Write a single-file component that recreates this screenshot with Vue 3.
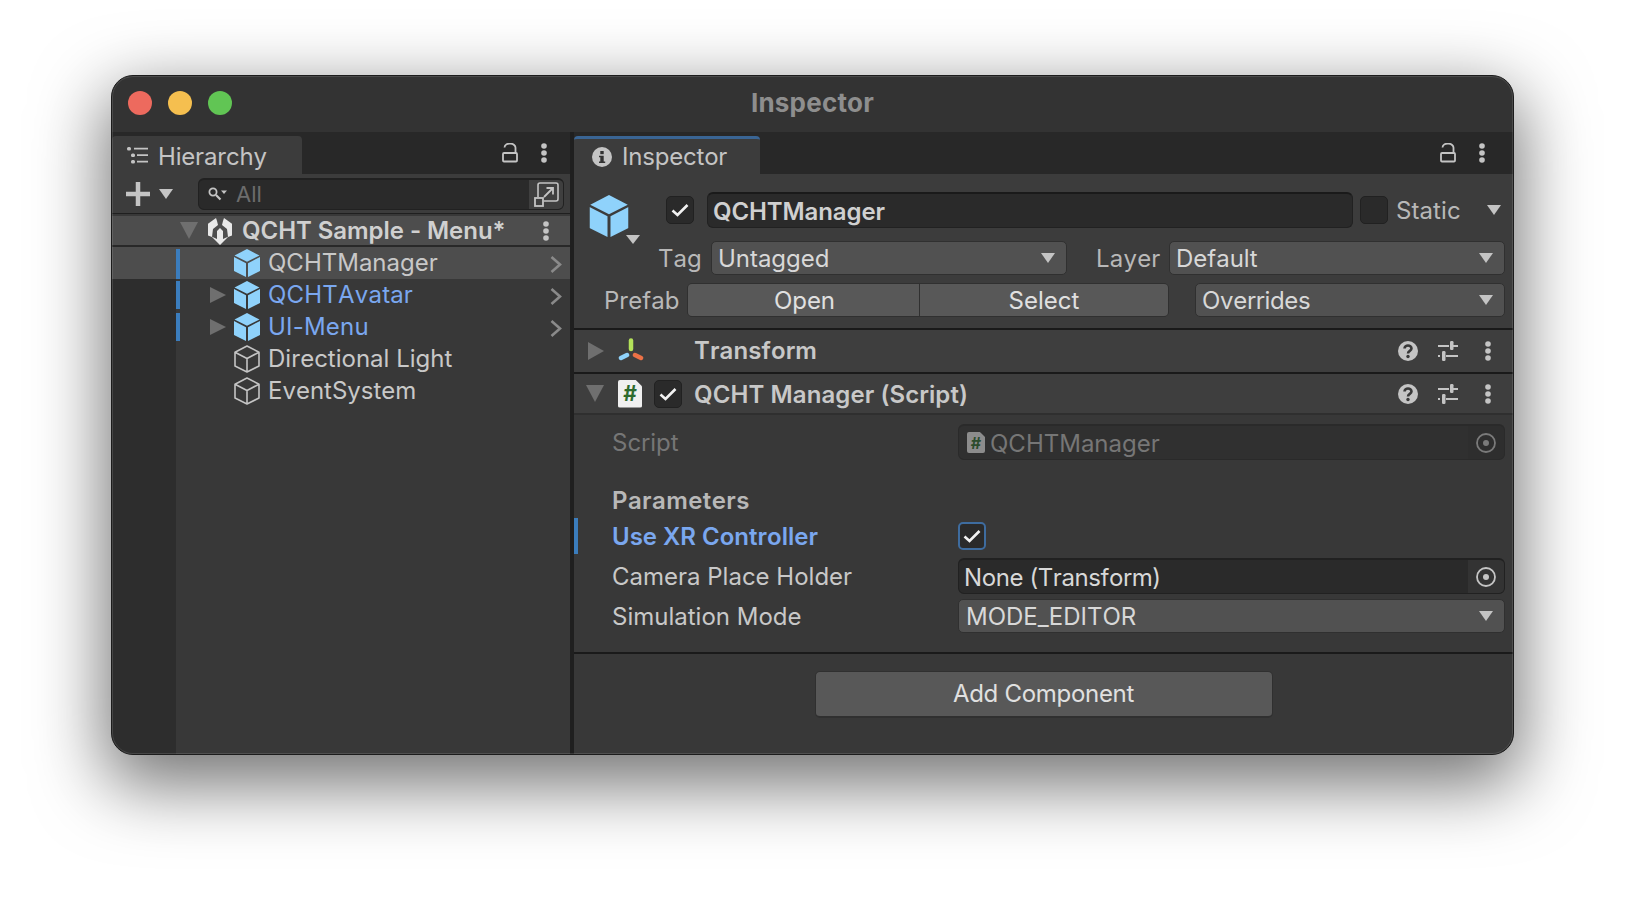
<template>
  <div class="page">
    <svg width="0" height="0" class="defs">
      <symbol id="cube" viewBox="0 0 26 28">
        <path d="M13 0 25.500 6.500 13 12.800.5 6.500z" fill="#8fd2fb" />
        <path d="M0 8 12 14.200V28L0 22z" fill="#8fd2fb" />
        <path d="M26 8 14 14.200V28L26 22z" fill="#8fd2fb" />
      </symbol>
      <symbol id="cube-line" viewBox="0 0 26 28">
        <path d="M13 1 25 7.200V21L13 27 1 21V7.200zM1 7.200 13 13.500 25 7.200M13 13.500V27" fill="none" stroke="#c4c4c4" stroke-width="1.600" stroke-linejoin="round" />
      </symbol>
      <symbol id="lock" viewBox="0 0 16 20">
        <path d="M2.500 4.500A5.500 4.200 0 0 1 13.500 5V10" fill="none" stroke="#c4c4c4" stroke-width="1.800" />
        <rect x="1" y="10" width="14" height="8.500" rx="1" fill="none" stroke="#c4c4c4" stroke-width="1.800" />
      </symbol>
      <symbol id="kebab" viewBox="0 0 6 20">
        <circle cx="3" cy="3" r="2.800" fill="#c4c4c4" />
        <circle cx="3" cy="10" r="2.800" fill="#c4c4c4" />
        <circle cx="3" cy="17" r="2.800" fill="#c4c4c4" />
      </symbol>
      <symbol id="check" viewBox="0 0 18 14">
        <path d="M1.500 7.500 6.500 12 16.500 2" fill="none" stroke="#f2f2f2" stroke-width="2.600" />
      </symbol>
      <symbol id="help" viewBox="0 0 20 20">
        <circle cx="10" cy="10" r="10" fill="#c4c4c4" />
        <path d="M6.500 7.500C6.500 3.500 13.500 3.500 13.500 7.500 13.500 10 10 9.800 10 12.500" fill="none" stroke="#383838" stroke-width="2.600" />
        <circle cx="10" cy="15.500" r="1.700" fill="#383838" />
      </symbol>
      <symbol id="sliders" viewBox="0 0 20 20">
        <path d="M0 5H11M15 5H20M0 15H2M8 15H20" stroke="#c4c4c4" stroke-width="2" />
        <rect x="12" y="0" width="3.500" height="9" rx="1.200" fill="#c4c4c4" />
        <rect x="4" y="10" width="3.500" height="10" rx="1.200" fill="#c4c4c4" />
      </symbol>
    </svg>

    <div class="window">
      <div class="titlebar">
        <div class="lights">
          <span class="light red"></span>
          <span class="light yellow"></span>
          <span class="light green"></span>
        </div>
        <span class="title">Inspector</span>
      </div>

      <div class="panes">
        <section class="hierarchy">
          <div class="tabbar">
            <div class="tab hier-tab">
              <svg class="list-icon" width="21" height="17" viewBox="0 0 21 17">
                <rect x="0" y="0" width="4" height="3.500" rx="1.500" fill="#c4c4c4" />
                <rect x="4" y="6.500" width="4" height="3.500" rx="1.500" fill="#c4c4c4" />
                <rect x="4" y="13" width="4" height="3.500" rx="1.500" fill="#c4c4c4" />
                <path d="M7 1.700H21M10 8.200H21M10 14.700H21" stroke="#c4c4c4" stroke-width="1.800" />
              </svg>
              <span class="tab-text">Hierarchy</span>
            </div>
            <div class="tab-actions hier-actions">
              <svg class="lock" width="16" height="20"><use href="#lock" /></svg>
              <svg class="kebab" width="6" height="20"><use href="#kebab" /></svg>
            </div>
          </div>

          <div class="toolbar">
            <svg class="plus" width="24" height="24" viewBox="0 0 24 24">
              <path d="M12 0V24M0 12H24" stroke="#c4c4c4" stroke-width="4.500" />
            </svg>
            <span class="tri tri-down toolbar-tri"></span>
            <div class="search">
              <svg class="search-icon" width="19" height="14" viewBox="0 0 19 14">
                <circle cx="5" cy="5" r="3.600" fill="none" stroke="#c4c4c4" stroke-width="1.800" />
                <path d="M8 8 12.500 12.500" stroke="#c4c4c4" stroke-width="2.200" />
                <path d="M13 3.500H19L16 7z" fill="#c4c4c4" />
              </svg>
              <span class="search-text">All</span>
              <span class="search-btn">
                <svg width="25" height="25" viewBox="0 0 25 25">
                  <path d="M4 15V3A2 2 0 0 1 6 1H22A2 2 0 0 1 24 3V17A2 2 0 0 1 22 19H10" fill="none" stroke="#c4c4c4" stroke-width="1.600" />
                  <rect x="1" y="16" width="8" height="8" fill="#3f3f3f" stroke="#c4c4c4" stroke-width="1.800" />
                  <path d="M10 15 19 6M12.500 6H19V12.500" fill="none" stroke="#c4c4c4" stroke-width="1.800" />
                </svg>
              </span>
            </div>
          </div>

          <div class="scene-row">
            <span class="tri tri-down tri-big scene-tri"></span>
            <svg class="unity" width="24" height="28" viewBox="4 3 24 28">
              <path d="M12 4 3.500 10 4 21.500 8 23 9 15 14 11 13 7z" fill="#e8e8e8" />
              <path d="M20 4 28.500 10 28 21.500 24 23 23 15 18 11 19 7z" fill="#e8e8e8" />
              <path d="M16 14 19 17V25L24.500 22.500 16 31 7.500 22.500 13 25V17z" fill="#e8e8e8" />
            </svg>
            <span class="scene-name">QCHT Sample - Menu*</span>
            <svg class="scene-kebab" width="6" height="20"><use href="#kebab" /></svg>
          </div>

          <div class="tree">
            <div v-for="row in rows" :key="row.name" class="row" :class="{ selected: row.selected }">
              <span class="gutter"></span>
              <span class="bar" :class="{ on: row.prefab }"></span>
              <span class="row-arrow"><span v-if="row.children" class="tri tri-right"></span></span>
              <svg class="row-icon" width="26" height="28"><use :href="row.prefab ? '#cube' : '#cube-line'" /></svg>
              <span class="row-name" :class="{ blue: row.children }">{{ row.name }}</span>
              <svg v-if="row.prefab" class="chevron" width="12" height="17" viewBox="0 0 12 17">
                <path d="M1.500 1 10 8.500 1.500 16" fill="none" stroke="#8a8a8a" stroke-width="2.600" />
              </svg>
            </div>
            <div class="tree-rest"><span class="gutter"></span></div>
          </div>
        </section>

        <section class="inspector">
          <div class="tabbar">
            <div class="tab insp-tab">
              <svg width="20" height="20" viewBox="0 0 20 20">
                <circle cx="10" cy="10" r="10" fill="#c4c4c4" />
                <rect x="8.300" y="4" width="3.400" height="3.200" fill="#333" />
                <path d="M7 8.700H11.700V14.500H13.200V16H7V14.500H8.300V10.200H7z" fill="#333" />
              </svg>
              <span class="tab-text">Inspector</span>
            </div>
            <div class="tab-actions insp-actions">
              <svg class="lock" width="16" height="20"><use href="#lock" /></svg>
              <svg class="kebab" width="6" height="20"><use href="#kebab" /></svg>
            </div>
          </div>

          <div class="go-header">
            <div class="go-line name-line">
              <svg class="go-cube" width="40" height="42" viewBox="0 0 26 28"><use href="#cube" /></svg>
              <span class="tri tri-down go-tri"></span>
              <span class="checkbox go-check"><svg width="18" height="14"><use href="#check" /></svg></span>
              <div class="name-field"><span>QCHTManager</span></div>
              <span class="checkbox"></span>
              <span class="static-label">Static</span>
              <span class="tri tri-down static-tri"></span>
            </div>
            <div class="go-line tag-line">
              <span class="tag-label">Tag</span>
              <div class="popup tag-popup"><span>Untagged</span><span class="tri tri-down"></span></div>
              <span class="layer-label">Layer</span>
              <div class="popup layer-popup"><span>Default</span><span class="tri tri-down"></span></div>
            </div>
            <div class="go-line prefab-line">
              <span class="prefab-label">Prefab</span>
              <div class="btn-group">
                <span class="seg open">Open</span>
                <span class="seg select">Select</span>
              </div>
              <div class="popup overrides"><span>Overrides</span><span class="tri tri-down"></span></div>
            </div>
          </div>

          <div class="comp-head transform-head">
            <span class="tri tri-right tri-big comp-tri"></span>
            <svg class="comp-icon" width="26" height="26" viewBox="0 0 26 26">
              <path d="M13 2.500V11" stroke="#b4e25a" stroke-width="4.500" stroke-linecap="round" />
              <path d="M9 17 3 20" stroke="#8fd2fb" stroke-width="4.500" stroke-linecap="round" />
              <path d="M17 17 23 20" stroke="#ec7146" stroke-width="4.500" stroke-linecap="round" />
            </svg>
            <span class="comp-spacer"></span>
            <span class="comp-name">Transform</span>
            <div class="comp-tools">
              <svg width="20" height="20"><use href="#help" /></svg>
              <svg width="20" height="20"><use href="#sliders" /></svg>
              <svg width="6" height="20"><use href="#kebab" /></svg>
            </div>
          </div>

          <div class="comp-head script-head">
            <span class="tri tri-down tri-big comp-tri"></span>
            <span class="script-icon"><b>#</b></span>
            <span class="checkbox comp-check"><svg width="18" height="14"><use href="#check" /></svg></span>
            <span class="comp-name">QCHT Manager (Script)</span>
            <div class="comp-tools">
              <svg width="20" height="20"><use href="#help" /></svg>
              <svg width="20" height="20"><use href="#sliders" /></svg>
              <svg width="6" height="20"><use href="#kebab" /></svg>
            </div>
          </div>

          <div class="props">
            <div class="prop script-prop">
              <span class="prop-label dim">Script</span>
              <div class="obj-field disabled">
                <span class="script-icon small"><b>#</b></span>
                <span class="obj-text">QCHTManager</span>
                <span class="picker">
                  <svg width="20" height="20" viewBox="0 0 20 20">
                    <circle cx="10" cy="10" r="9" fill="none" stroke="#7a7a7a" stroke-width="1.800" />
                    <circle cx="10" cy="10" r="3" fill="#7a7a7a" />
                  </svg>
                </span>
              </div>
            </div>
            <div class="params-title">Parameters</div>
            <div class="prop xr-prop">
              <span class="prop-label overridden">Use XR Controller</span>
              <span class="checkbox focused"><svg width="18" height="14"><use href="#check" /></svg></span>
            </div>
            <div class="prop camera-prop">
              <span class="prop-label">Camera Place Holder</span>
              <div class="obj-field">
                <span class="obj-text plain">None (Transform)</span>
                <span class="picker">
                  <svg width="20" height="20" viewBox="0 0 20 20">
                    <circle cx="10" cy="10" r="9" fill="none" stroke="#c4c4c4" stroke-width="1.800" />
                    <circle cx="10" cy="10" r="3" fill="#c4c4c4" />
                  </svg>
                </span>
              </div>
            </div>
            <div class="prop sim-prop">
              <span class="prop-label">Simulation Mode</span>
              <div class="popup sim-popup"><span>MODE_EDITOR</span><span class="tri tri-down"></span></div>
            </div>
          </div>

          <div class="add-area">
            <div class="add-btn"><span>Add Component</span></div>
          </div>
        </section>
      </div>
    </div>
  </div>
</template>

<script setup>
const rows = [
  { name: 'QCHTManager', prefab: true, selected: true },
  { name: 'QCHTAvatar', prefab: true, children: true },
  { name: 'UI-Menu', prefab: true, children: true },
  { name: 'Directional Light' },
  { name: 'EventSystem' },
];
</script>

<style>
html,
body {
  margin: 0;
  background: #fff;
  overflow: hidden;
}
</style>

<style scoped>
.page {
  width: 1626px;
  height: 902px;
  box-sizing: border-box;
  padding: 75px 112px 0 111px;
  background: #fff;
  font-family: Inter, "Liberation Sans", sans-serif;
  font-size: 24px;
  font-kerning: none;
  color: #c8c8c8;
}

.defs {
  position: absolute;
}

.window {
  width: 1403px;
  height: 680px;
  box-sizing: border-box;
  border: 1px solid #1c1c1c;
  border-radius: 22px;
  overflow: hidden;
  position: relative;
  display: flex;
  flex-direction: column;
  background: #333;
  box-shadow: 0 24px 70px 6px rgba(0, 0, 0, 0.55);
}

/* thin light ring just inside the window edge */
.window::after {
  content: "";
  position: absolute;
  inset: 0;
  border-radius: 21px;
  box-shadow: inset 0 0 0 1px rgba(255, 255, 255, 0.12);
  pointer-events: none;
}

.titlebar {
  height: 56px;
  flex: none;
  display: flex;
  align-items: center;
  justify-content: center;
  position: relative;
  background: #333;
}

.lights {
  position: absolute;
  left: 16px;
  top: 15px;
  display: flex;
  gap: 16px;
}

.light {
  width: 24px;
  height: 24px;
  border-radius: 50%;
}

.red { background: #ed6a5e; }
.yellow { background: #f5bf4f; }
.green { background: #61c554; }

.title {
  font-size: 26px;
  font-weight: 700;
  color: #8e8e8e;
  margin-top: -4px;
  letter-spacing: 0.2px;
}

.panes {
  flex: 1;
  display: flex;
  min-height: 0;
  gap: 4px;
  background: #1f1f1f;
}

.hierarchy {
  width: 458px;
  flex: none;
  display: flex;
  flex-direction: column;
  background: #383838;
}

.inspector {
  flex: 1;
  display: flex;
  flex-direction: column;
  background: #383838;
}

.tabbar {
  height: 42px;
  flex: none;
  display: flex;
  align-items: flex-end;
  justify-content: space-between;
  background: #282828;
}

.tab {
  height: 38px;
  box-sizing: border-box;
  display: flex;
  align-items: center;
  background: #3c3c3c;
  border-radius: 4px 4px 0 0;
  color: #c4c4c4;
}

.tab-text {
  letter-spacing: -0.2px;
}

.hier-tab {
  width: 190px;
  padding-left: 15px;
  gap: 10px;
}

.hier-tab .tab-text {
  margin-top: 2px;
}

.insp-tab {
  width: 186px;
  padding-left: 18px;
  gap: 10px;
  border-top: 3px solid #3a6594;
}

.tab-actions {
  align-self: center;
  display: flex;
  align-items: center;
}

.hier-actions {
  gap: 23px;
  margin-right: 23px;
}

.insp-actions {
  gap: 23px;
  margin-right: 28px;
}

.toolbar {
  height: 40px;
  flex: none;
  display: flex;
  align-items: center;
  padding-left: 14px;
  box-sizing: border-box;
  background: #3c3c3c;
  border-bottom: 1px solid #1f1f1f;
}

.tri {
  display: inline-block;
  flex: none;
  width: 0;
  height: 0;
}

.tri-down {
  border-left: 7px solid transparent;
  border-right: 7px solid transparent;
  border-top: 10px solid #c4c4c4;
}

.tri-right {
  border-top: 8px solid transparent;
  border-bottom: 8px solid transparent;
  border-left: 16px solid #6f6f6f;
}

.tri-big.tri-down {
  border-left-width: 9px;
  border-right-width: 9px;
  border-top: 17px solid #6f6f6f;
}

.tri-big.tri-right {
  border-top-width: 9px;
  border-bottom-width: 9px;
  border-left-width: 16px;
}

.toolbar-tri {
  margin-left: 9px;
}

.search {
  margin-left: 25px;
  width: 366px;
  height: 32px;
  box-sizing: border-box;
  display: flex;
  align-items: center;
  background: #2a2a2a;
  border: 1px solid #212121;
  border-top-width: 2px;
  border-radius: 6px;
  overflow: hidden;
}

.search-icon {
  margin-left: 9px;
}

.search-text {
  margin-left: 9px;
  color: #6c6c6c;
  font-size: 22px;
}

.search-btn {
  margin-left: auto;
  width: 34px;
  height: 100%;
  display: flex;
  align-items: center;
  justify-content: center;
  background: #3f3f3f;
}

.scene-row {
  height: 33px;
  flex: none;
  display: flex;
  align-items: center;
  box-sizing: border-box;
  background: #4d4d4d;
  border-top: 2px solid #383838;
  border-bottom: 2px solid #282828;
}

.scene-tri {
  margin-left: 68px;
}

.unity {
  margin-left: 10px;
}

.scene-name {
  margin-left: 10px;
  font-weight: 600;
  font-size: 24px;
  color: #d0d0d0;
  letter-spacing: -0.05px;
}

.scene-kebab {
  margin-left: auto;
  margin-right: 21px;
}

.tree {
  flex: 1;
  display: flex;
  flex-direction: column;
}

.row {
  height: 32px;
  flex: none;
  display: flex;
  align-items: center;
}

.row.selected {
  background: #4d4d4d;
}

.gutter {
  width: 64px;
  flex: none;
  height: 100%;
  background: #2d2d2d;
}

.selected .gutter {
  background: transparent;
}

.bar {
  width: 4px;
  height: 28px;
  flex: none;
  align-self: flex-end;
  margin-bottom: 2px;
}

.selected .bar {
  margin-bottom: 0;
  height: 30px;
}

.bar.on {
  background: #3b7dbd;
}

.row-arrow {
  width: 54px;
  flex: none;
  padding-left: 30px;
  box-sizing: border-box;
  display: flex;
  align-items: center;
}

.row-icon {
  flex: none;
}

.row-name {
  margin-left: 8px;
  margin-bottom: 2px;
  color: #c8c8c8;
}

.row-name.blue {
  color: #7aa7ef;
  letter-spacing: 0.2px;
}

.chevron {
  margin-left: auto;
  margin-right: 8px;
  margin-top: 3px;
}

.tree-rest {
  flex: 1;
  display: flex;
}

.tree-rest .gutter {
  height: auto;
}

.go-header {
  height: 154px;
  flex: none;
  box-sizing: border-box;
  background: #3c3c3c;
  padding-top: 18px;
  display: flex;
  flex-direction: column;
}

.go-line {
  display: flex;
  align-items: center;
  flex: none;
}

.name-line {
  height: 36px;
  position: relative;
}

.go-cube {
  margin-left: 15px;
  margin-top: 11px;
  flex: none;
}

.go-tri {
  position: absolute;
  left: 52px;
  top: 43px;
  border-left-width: 7px;
  border-right-width: 7px;
  border-top-width: 9px;
}

.checkbox {
  width: 28px;
  height: 28px;
  flex: none;
  box-sizing: border-box;
  display: flex;
  align-items: center;
  justify-content: center;
  background: #2a2a2a;
  border: 1px solid #212121;
  border-radius: 5px;
}

.go-check {
  margin-left: 37px;
}

.name-field {
  margin-left: 13px;
  width: 646px;
  height: 36px;
  box-sizing: border-box;
  padding-left: 5px;
  display: flex;
  align-items: center;
  background: #2a2a2a;
  border: 1px solid #212121;
  border-top: 2px solid #1a1a1a;
  border-radius: 6px;
  font-weight: 600;
  font-size: 24px;
  color: #d0d0d0;
}

.name-field span {
  margin-top: 2px;
  letter-spacing: -0.1px;
}

.name-line .checkbox:not(.go-check) {
  margin-left: 7px;
}

.static-label {
  margin-left: 8px;
  color: #b8b8b8;
  letter-spacing: 0.1px;
}

.static-tri {
  margin-left: 26px;
}

.popup {
  box-sizing: border-box;
  height: 34px;
  display: flex;
  align-items: center;
  justify-content: space-between;
  padding: 0 11px 0 6px;
  background: #515151;
  border: 1px solid #303030;
  border-radius: 5px;
  color: #d8d8d8;
}

.tag-line {
  margin-top: 13px;
  height: 34px;
}

.tag-label {
  margin-left: 84px;
  width: 53px;
  color: #b8b8b8;
}

.tag-popup {
  width: 356px;
}

.layer-label {
  margin-left: 29px;
  width: 73px;
  color: #b8b8b8;
  letter-spacing: 0.2px;
}

.layer-popup {
  width: 336px;
}

.prefab-line {
  margin-top: 8px;
  height: 34px;
}

.prefab-label {
  margin-left: 30px;
  width: 83px;
  color: #b8b8b8;
}

.btn-group {
  display: flex;
  width: 482px;
  height: 34px;
  box-sizing: border-box;
  background: #303030;
  border: 1px solid #303030;
  border-radius: 5px;
  gap: 1px;
  overflow: hidden;
}

.seg {
  display: flex;
  align-items: center;
  justify-content: center;
  background: #585858;
  color: #e0e0e0;
  padding-left: 2px;
}

.open { width: 229px; letter-spacing: -0.1px; }
.select { flex: 1; padding-left: 0; }

.overrides {
  margin-left: 26px;
  width: 310px;
  letter-spacing: -0.3px;
}

.comp-head {
  flex: none;
  display: flex;
  align-items: center;
  box-sizing: border-box;
  background: #3e3e3e;
  border-top: 2px solid #1a1a1a;
}

.transform-head {
  height: 44px;
}

.script-head {
  height: 43px;
  border-bottom: 2px solid #2f2f2f;
}

.comp-tri {
  margin-left: 14px;
}

.script-head .comp-tri {
  margin-left: 12px;
}

.comp-icon {
  margin-left: 14px;
  flex: none;
}

.comp-spacer {
  width: 35px;
}

.script-icon {
  margin-left: 14px;
  width: 24px;
  height: 28px;
  flex: none;
  display: flex;
  align-items: center;
  justify-content: center;
  background: #f0f0f0;
  clip-path: polygon(0 0, 72% 0, 100% 24%, 100% 100%, 0 100%);
  border-radius: 2px;
  color: #2e6b2e;
  font-size: 21px;
  line-height: 1;
}

.comp-check {
  margin-left: 12px;
}

.comp-name {
  margin-left: 12px;
  font-weight: 600;
  color: #c8c8c8;
}

.script-head .comp-name {
  margin-top: 2px;
  letter-spacing: 0.1px;
}

.transform-head .comp-name {
  margin-left: 15px;
  margin-bottom: 2px;
  letter-spacing: 0.1px;
}

.comp-tools {
  margin-left: auto;
  margin-right: 22px;
  display: flex;
  align-items: center;
  gap: 20px;
}

.comp-tools svg:last-child {
  margin-left: 7px;
}

.props {
  height: 239px;
  flex: none;
  box-sizing: border-box;
  padding-top: 9px;
  border-bottom: 2px solid #1a1a1a;
  display: flex;
  flex-direction: column;
}

.prop {
  display: flex;
  align-items: center;
  flex: none;
  padding-left: 38px;
  padding-right: 8px;
}

.prop-label {
  width: 346px;
  flex: none;
}

.dim {
  color: #767676;
}

.overridden {
  color: #7aa7ef;
  font-weight: 600;
}

.params-title {
  margin-top: 22px;
  height: 36px;
  padding-left: 38px;
  display: flex;
  align-items: center;
  font-weight: 600;
  color: #b8b8b8;
  letter-spacing: 0.4px;
}

.script-prop {
  height: 36px;
}

.xr-prop {
  height: 36px;
  margin-top: 0;
  padding-left: 34px;
  border-left: 4px solid #3b7dbd;
}

.camera-prop {
  height: 36px;
  margin-top: 4px;
}

.sim-prop {
  height: 34px;
  margin-top: 5px;
}

.focused {
  border: 2px solid #3e6c9f;
}

.obj-field {
  flex: 1;
  height: 36px;
  box-sizing: border-box;
  display: flex;
  align-items: center;
  background: #2a2a2a;
  border: 1px solid #212121;
  border-top-width: 2px;
  border-radius: 6px;
  overflow: hidden;
}

.obj-field.disabled {
  background: #303030;
  border-color: #2a2a2a;
}

.script-icon.small {
  margin-left: 8px;
  width: 18px;
  height: 21px;
  background: #8c8c8c;
  color: #2c4d2c;
  font-size: 16px;
}

.obj-text {
  margin-left: 5px;
  margin-top: 2px;
  color: #767676;
}

.obj-text.plain {
  margin-left: 5px;
  color: #d8d8d8;
  letter-spacing: -0.4px;
}

.picker {
  margin-left: auto;
  width: 36px;
  height: 100%;
  display: flex;
  align-items: center;
  justify-content: center;
  background: #333;
}

.disabled .picker {
  background: #2e2e2e;
}

.sim-popup {
  flex: 1;
  padding-left: 7px;
}

.add-area {
  flex: 1;
  display: flex;
  justify-content: center;
  padding-top: 17px;
}

.add-btn {
  width: 458px;
  height: 47px;
  box-sizing: border-box;
  display: flex;
  align-items: center;
  justify-content: center;
  background: #585858;
  border: 1px solid #303030;
  border-bottom-width: 2px;
  border-radius: 5px;
  color: #e0e0e0;
  letter-spacing: -0.3px;
}

.add-btn span {
  margin-bottom: 2px;
}
</style>
